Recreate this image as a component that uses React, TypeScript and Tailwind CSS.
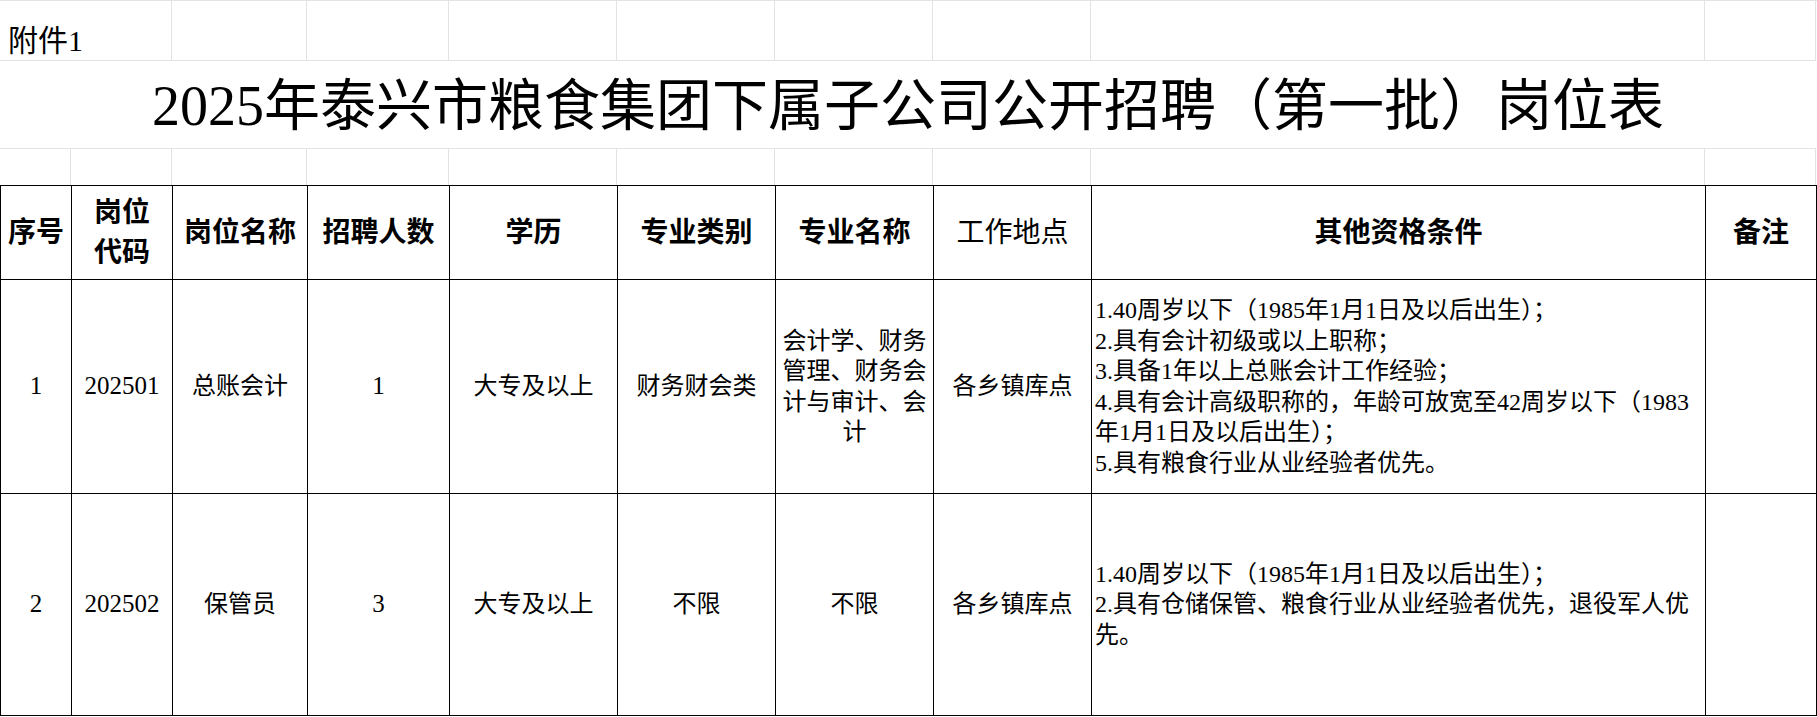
import React from "react";

const COLS =
  "grid grid-cols-[71px_101px_135px_142px_168px_158px_158px_158px_614px_111px]";
const FONT = "font-['Liberation_Serif','Noto_Sans_CJK_SC',serif]";

const HEADERS: { label: React.ReactNode; bold: boolean }[] = [
  { label: "序号", bold: true },
  {
    label: (
      <>
        岗位
        <br />
        代码
      </>
    ),
    bold: true,
  },
  { label: "岗位名称", bold: true },
  { label: "招聘人数", bold: true },
  { label: "学历", bold: true },
  { label: "专业类别", bold: true },
  { label: "专业名称", bold: true },
  { label: "工作地点", bold: false },
  { label: "其他资格条件", bold: true },
  { label: "备注", bold: true },
];

const ROWS = [
  {
    height: "h-[214px]",
    cells: [
      "1",
      "202501",
      "总账会计",
      "1",
      "大专及以上",
      "财务财会类",
      ["会计学、财务", "管理、财务会", "计与审计、会", "计"],
      "各乡镇库点",
    ],
    conditions: [
      "1.40周岁以下（1985年1月1日及以后出生）；",
      "2.具有会计初级或以上职称；",
      "3.具备1年以上总账会计工作经验；",
      "4.具有会计高级职称的，年龄可放宽至42周岁以下（1983",
      "年1月1日及以后出生）；",
      "5.具有粮食行业从业经验者优先。",
    ],
  },
  {
    height: "h-[222px]",
    cells: ["2", "202502", "保管员", "3", "大专及以上", "不限", "不限", "各乡镇库点"],
    conditions: [
      "1.40周岁以下（1985年1月1日及以后出生）；",
      "2.具有仓储保管、粮食行业从业经验者优先，退役军人优",
      "先。",
    ],
  },
];

// plain numbers render a touch larger than the CJK text
const isNumber = (v: string) => /^\d+$/.test(v);

export default function App() {
  return (
    <div className={`w-[1817px] h-[717px] bg-white text-black ${FONT}`}>
      {/* sheet rows above the table */}
      <div className={`${COLS} border-t border-[#e3e3e3]`}>
        <div className="col-span-2 h-[60px] border-r border-b border-[#e3e3e3] flex items-end pl-[8px] pb-[1px] text-[30px] leading-[36px] whitespace-nowrap">
          附件1
        </div>
        {Array.from({ length: 8 }).map((_, i) => (
          <div key={i} className="h-[60px] border-r border-b border-[#e3e3e3]" />
        ))}

        <div className="col-span-10 h-[88px] border-b border-[#e3e3e3] flex items-center justify-center text-[56px] leading-[64px] whitespace-nowrap pt-[2px]">
          2025年泰兴市粮食集团下属子公司公开招聘（第一批）岗位表
        </div>

        {Array.from({ length: 10 }).map((_, i) => (
          <div key={i} className="h-[36px] border-r border-[#e3e3e3]" />
        ))}
      </div>

      {/* table */}
      <div className={`${COLS} border-t border-l border-black`}>
        {HEADERS.map((h, i) => (
          <div
            key={i}
            className={`h-[94px] border-r border-b border-black flex items-center justify-center text-center text-[28px] leading-[40px] ${
              h.bold ? "font-bold" : "font-normal"
            }`}
          >
            <span>{h.label}</span>
          </div>
        ))}

        {ROWS.map((row, r) => (
          <React.Fragment key={r}>
            {row.cells.map((c, i) => (
              <div
                key={i}
                className={`${row.height} border-r border-b border-black flex items-center justify-center text-center text-[24px] leading-[30.5px] px-[2px]`}
              >
                {Array.isArray(c) ? (
                  <div>
                    {c.map((line, j) => (
                      <div key={j} className="whitespace-nowrap">
                        {line}
                      </div>
                    ))}
                  </div>
                ) : (
                  <span
                    className={`whitespace-nowrap ${isNumber(c) ? "text-[25px]" : ""}`}
                  >
                    {c}
                  </span>
                )}
              </div>
            ))}
            <div
              className={`${row.height} border-r border-b border-black flex items-center pl-[3px] text-[24px] leading-[30.5px]`}
            >
              <div>
                {row.conditions.map((line, j) => (
                  <div key={j} className="whitespace-nowrap">
                    {line}
                  </div>
                ))}
              </div>
            </div>
            <div className={`${row.height} border-r border-b border-black`} />
          </React.Fragment>
        ))}
      </div>
    </div>
  );
}
